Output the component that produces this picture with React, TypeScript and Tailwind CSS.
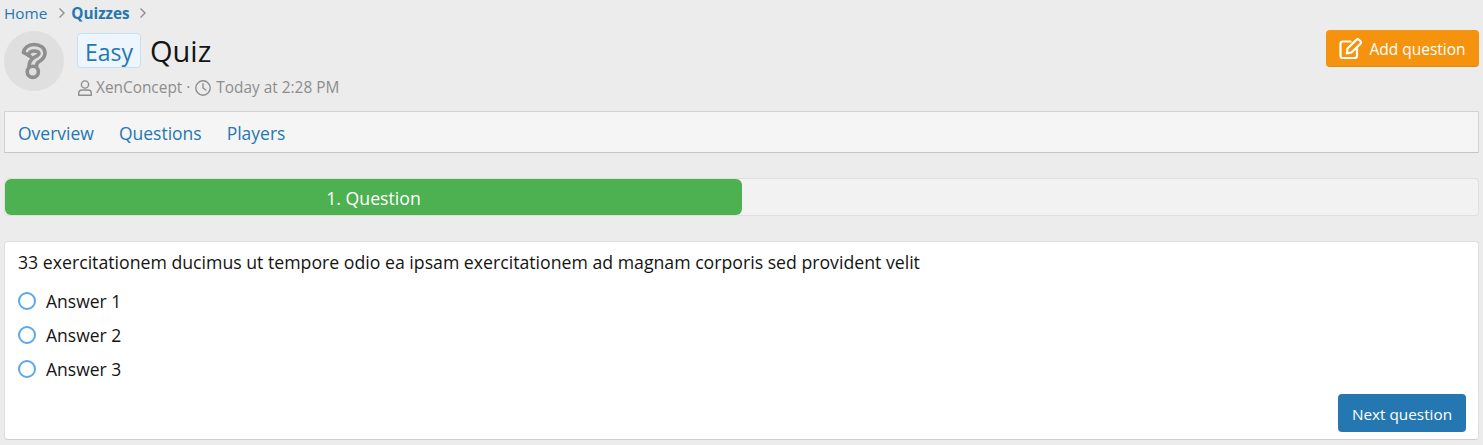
import React from "react";

function Chevron() {
  return (
    <svg width="8" height="12" viewBox="0 0 8 12" fill="none" className="shrink-0">
      <path d="M1.500 1.500 6 6l-4.500 4.500" stroke="#8e8e8e" strokeWidth="1.400" />
    </svg>
  );
}

function QuestionIcon() {
  return (
    <svg width="28" height="38" viewBox="0 0 28 38" fill="none" stroke="#8e8e8e" strokeWidth="3.600" strokeLinecap="round" strokeLinejoin="round">
      <path d="M3.500 10.500C4 6 8 2.500 14 2.500 20.500 2.500 25 6 25 11 25 15.500 22 18 18.500 20 17 21 16.500 22.500 16.500 24.500" />
      <path d="M3.500 10.500 8 13C9 10.500 11 9 13.500 9 17 9 19 9.500 19 11.500 19 13 17 14 14 15.500 11 17.500 9 20 9 24.500" />
      <path d="M11 15 8 13" />
      <circle cx="12.800" cy="29.800" r="5.600" />
    </svg>
  );
}

function UserIcon() {
  return (
    <svg width="16" height="16" viewBox="0 0 16 16" fill="none" stroke="#8e8e8e" strokeWidth="1.400">
      <circle cx="8" cy="4.500" r="3.600" />
      <path d="M1.700 15.200v-1.800c0-2 1.500-3.400 3.400-3.400h5.800c1.900 0 3.400 1.400 3.400 3.400v1.800z" strokeLinejoin="round" />
    </svg>
  );
}

function ClockIcon() {
  return (
    <svg width="16" height="16" viewBox="0 0 16 16" fill="none" stroke="#8e8e8e" strokeWidth="1.400">
      <circle cx="8" cy="8" r="7.200" />
      <path d="M8 3.800V8l2.800 2" strokeLinecap="round" />
    </svg>
  );
}

function EditIcon() {
  return (
    <svg width="24" height="21" viewBox="0 0 24 21" fill="none" stroke="#ffffff" strokeWidth="2.200">
      <path d="M11.500 3.500H3.500A2 2 0 0 0 1.500 5.500v12.500a2 2 0 0 0 2 2h12.500a2 2 0 0 0 2-2v-7" strokeLinecap="round" />
      <path d="M8.500 10.500 17.500 1.700c.7-.7 1.700-.7 2.400 0l1.600 1.600c.7.7.7 1.700 0 2.400L12.500 14.500l-4.700.8z" strokeLinejoin="round" />
    </svg>
  );
}

function Answer({ label }: { label: string }) {
  return (
    <label className="flex h-[34px] items-center gap-[10px]">
      <span className="h-[18px] w-[18px] rounded-full border-2 border-[#5aa7ea] bg-white" />
      <span className="pt-[2px] text-[17.5px] leading-none text-[#141414]">{label}</span>
    </label>
  );
}

export default function App() {
  return (
    <div className="h-[445px] overflow-hidden bg-[#ececec] px-[4px] font-['Open_Sans','Noto_Sans',sans-serif]">
      <div className="flex h-[26px] items-center text-[15.3px] text-[#2577b1]">
        <span>Home</span>
        <span className="ml-[11px] mr-[5px]"><Chevron /></span>
        <b className="font-bold">Quizzes</b>
        <span className="ml-[9px]"><Chevron /></span>
      </div>
      <div className="mt-[5px] flex h-[70px] items-start">
        <div className="flex h-[60px] w-[60px] items-center justify-center rounded-full bg-[#dfdfdf]">
          <QuestionIcon />
        </div>
        <div className="ml-[13px] flex-1">
          <div className="flex items-center gap-[9px] pt-[2px]">
            <span className="flex h-[35px] w-[64px] items-center justify-center rounded-[4px] border border-[#c4e1f8] bg-[#edf6fd] pt-[3px] text-[23px] text-[#2577b1]">Easy</span>
            <span className="text-[29px] leading-[35px] text-[#141414]">Quiz</span>
          </div>
          <div className="mt-[10px] flex items-center text-[15.4px] leading-[20px] text-[#8c8c8c]">
            <UserIcon />
            <span className="ml-[3px]">XenConcept ·</span>
            <span className="ml-[5px]"><ClockIcon /></span>
            <span className="ml-[5px]">Today at 2:28 PM</span>
          </div>
        </div>
        <button className="mt-[-1px] flex h-[37px] w-[153px] items-center justify-center gap-[6px] rounded-[4px] border-b border-[#e08a0c] bg-[#f5930e] text-[15.5px] text-white">
          <EditIcon />
          <span className="pt-[3px]">Add question</span>
        </button>
      </div>
      <nav className="mt-[10px] flex h-[42px] items-center gap-[25px] border border-[#d3d3d3] border-b-[#c6c6c6] bg-[#f5f5f5] px-[13px] pt-[2px] text-[17.5px] text-[#2577b1]">
        <span>Overview</span>
        <span>Questions</span>
        <span>Players</span>
      </nav>
      <div className="mt-[25px] h-[38px] rounded-[4px] border border-[#dfdfdf] bg-[#f2f2f2]">
        <div className="flex h-[36px] w-[737px] items-center justify-center rounded-[6px] bg-[#4db051] pt-[2px] text-[17.7px] text-white">1. Question</div>
      </div>
      <div className="mt-[25px] h-[199px] rounded-[4px] border border-[#dfdfdf] border-b-[#cfcfcf] bg-white pl-[13px] pr-[12px]">
        <p className="pt-[8px] text-[17.72px] leading-[24px] text-[#141414]">33 exercitationem ducimus ut tempore odio ea ipsam exercitationem ad magnam corporis sed provident velit</p>
        <div className="mt-[10px]">
          <Answer label="Answer 1" />
          <Answer label="Answer 2" />
          <Answer label="Answer 3" />
        </div>
        <div className="mt-[8px] flex justify-end">
          <button className="h-[38px] w-[128px] rounded-[4px] bg-[#2577b1] pt-[2px] text-[15.3px] text-white">Next question</button>
        </div>
      </div>
    </div>
  );
}
